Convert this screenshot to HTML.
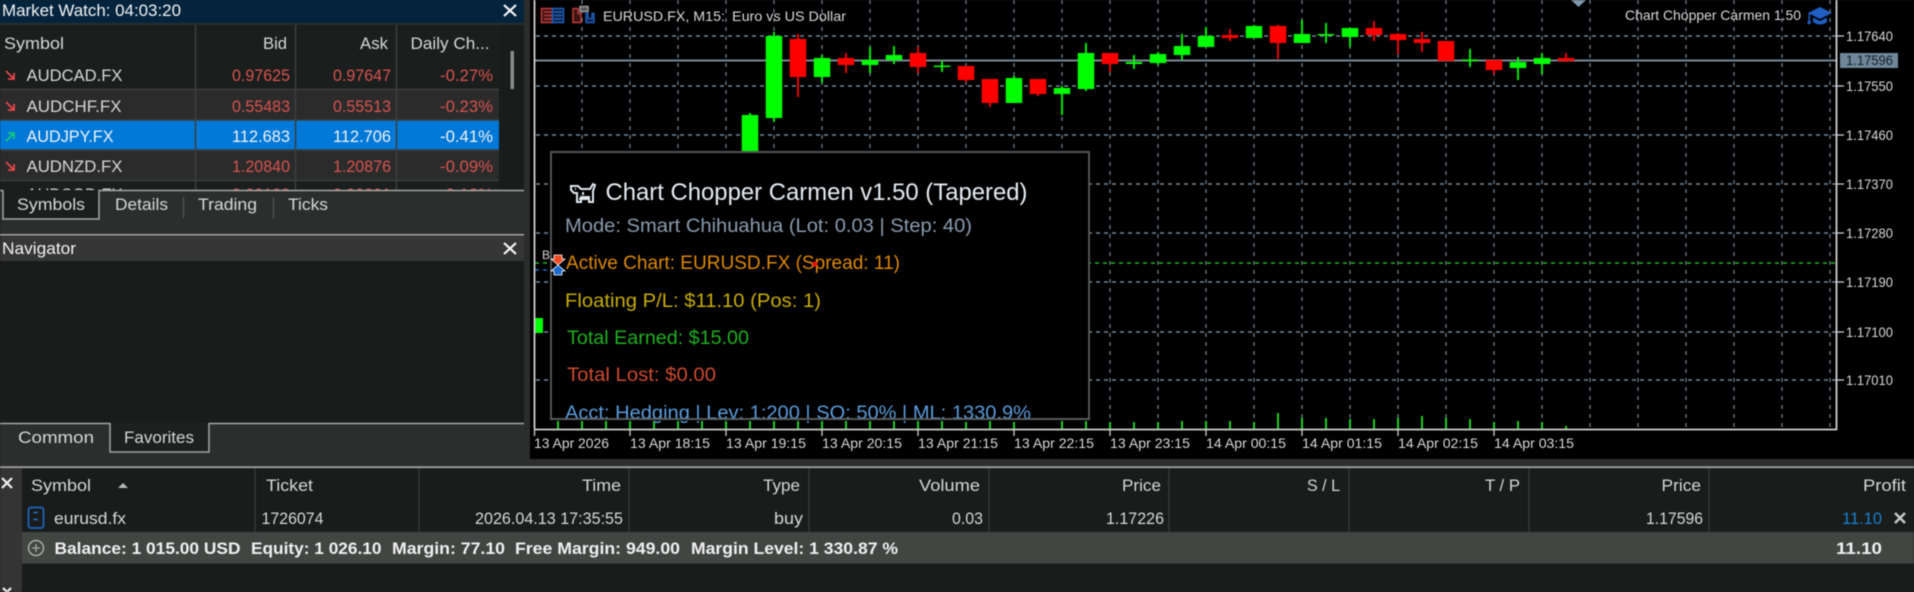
<!DOCTYPE html>
<html><head><meta charset="utf-8"><title>Market Watch</title>
<style>
html,body{margin:0;padding:0;background:#181c1a;width:1914px;height:592px;overflow:hidden}
svg{display:block;filter:blur(.45px)}
text{font-family:"Liberation Sans",sans-serif;font-size:17px;fill:#d6d8d6}
.r{fill:#d9534f}
.w{fill:#f2f4f4}
.c text,text.c{font-size:14px;fill:#d8d8d8}
.b{font-weight:bold;fill:#f0f0f0}
.p{font-size:19px}
</style></head><body>
<svg width="1914" height="592" viewBox="0 0 1914 592" xmlns="http://www.w3.org/2000/svg">
<rect width="1914" height="592" fill="#181c1a"/>

<!-- Market watch -->
<rect x="0" y="0" width="524" height="23" fill="#04243e"/>
<rect x="0" y="23" width="524" height="2" fill="#2a2d2b"/>
<text x="2" y="16" textLength="179" lengthAdjust="spacingAndGlyphs" class="w">Market Watch: 04:03:20</text>
<rect x="0" y="25" width="499" height="165" fill="#1a1e1c"/>
<rect x="499" y="25" width="25" height="165" fill="#181c1a"/>
<rect x="0" y="90" width="499" height="30" fill="#2b2b2b"/>
<rect x="0" y="120" width="499" height="30" fill="#0078d7"/>
<rect x="0" y="150" width="499" height="30" fill="#2b2b2b"/>
<path d="M0 89.500H499M0 120H499M0 150H499M0 180.500H499" stroke="#3c3e3d" stroke-width="1.500"/>
<path d="M195.500 25V190M295.500 25V190M396.500 25V190" stroke="#3c3e3d" stroke-width="1.500"/>
<rect x="510.500" y="51" width="3.500" height="38" fill="#8a8c8c"/>
<path d="M504 5l12 11M516 5l-12 11" stroke="#f4f4f4" stroke-width="2.200" fill="none"/>
<text x="4" y="49" textLength="60" lengthAdjust="spacingAndGlyphs">Symbol</text>
<text x="263" y="49" textLength="24" lengthAdjust="spacingAndGlyphs">Bid</text>
<text x="360" y="49" textLength="28" lengthAdjust="spacingAndGlyphs">Ask</text>
<text x="410.500" y="49" textLength="79" lengthAdjust="spacingAndGlyphs">Daily Ch...</text>
<g fill="none" stroke-width="1.800">
<path d="M6 71l8 8M14 73v6H8" stroke="#e8474a"/>
<path d="M6 102l8 8M14 104v6H8" stroke="#e8474a"/>
<path d="M6 141l8-8M8 133h6v6" stroke="#12c97a"/>
<path d="M6 162l8 8M14 164v6H8" stroke="#e8474a"/>
</g>
<text x="26.500" y="81" textLength="96" lengthAdjust="spacingAndGlyphs">AUDCAD.FX</text>
<text x="232" y="81" class="r" textLength="58" lengthAdjust="spacingAndGlyphs">0.97625</text><text x="333" y="81" class="r" textLength="58" lengthAdjust="spacingAndGlyphs">0.97647</text><text x="440" y="81" class="r" textLength="53" lengthAdjust="spacingAndGlyphs">-0.27%</text>
<text x="26.500" y="112" textLength="95" lengthAdjust="spacingAndGlyphs">AUDCHF.FX</text>
<text x="232" y="112" class="r" textLength="58" lengthAdjust="spacingAndGlyphs">0.55483</text><text x="333" y="112" class="r" textLength="58" lengthAdjust="spacingAndGlyphs">0.55513</text><text x="440" y="112" class="r" textLength="53" lengthAdjust="spacingAndGlyphs">-0.23%</text>
<text x="26.500" y="142" textLength="87" lengthAdjust="spacingAndGlyphs" class="w">AUDJPY.FX</text>
<text x="232" y="142" class="w" textLength="58" lengthAdjust="spacingAndGlyphs">112.683</text><text x="333" y="142" class="w" textLength="58" lengthAdjust="spacingAndGlyphs">112.706</text><text x="440" y="142" class="w" textLength="53" lengthAdjust="spacingAndGlyphs">-0.41%</text>
<text x="26.500" y="172" textLength="96" lengthAdjust="spacingAndGlyphs">AUDNZD.FX</text>
<text x="232" y="172" class="r" textLength="58" lengthAdjust="spacingAndGlyphs">1.20840</text><text x="333" y="172" class="r" textLength="58" lengthAdjust="spacingAndGlyphs">1.20876</text><text x="440" y="172" class="r" textLength="53" lengthAdjust="spacingAndGlyphs">-0.09%</text>
<text x="26.500" y="200" textLength="96" lengthAdjust="spacingAndGlyphs">AUDSGD.FX</text>
<text x="232" y="200" class="r" textLength="58" lengthAdjust="spacingAndGlyphs">0.90108</text><text x="333" y="200" class="r" textLength="58" lengthAdjust="spacingAndGlyphs">0.90091</text><text x="440" y="200" class="r" textLength="53" lengthAdjust="spacingAndGlyphs">-0.12%</text>

<!-- MW tabs -->
<rect x="0" y="190" width="524" height="44" fill="#2b2e2c"/>
<path d="M3 190V219H99V190Z" fill="#1a1e1c"/>
<path d="M0 190.500H3M3 190V219H99V190.500H524" fill="none" stroke="#a4a6a4" stroke-width="1.500"/>
<text x="17" y="210" textLength="68" lengthAdjust="spacingAndGlyphs">Symbols</text>
<text x="115" y="210" textLength="53" lengthAdjust="spacingAndGlyphs">Details</text>
<text x="198" y="210" textLength="59" lengthAdjust="spacingAndGlyphs">Trading</text>
<text x="288" y="210" textLength="40" lengthAdjust="spacingAndGlyphs">Ticks</text>
<path d="M183.500 197V218M273.500 197V218" stroke="#555856" stroke-width="1.200"/>

<!-- Navigator -->
<rect x="0" y="234" width="524" height="27" fill="#353635"/>
<rect x="0" y="234" width="524" height="1.500" fill="#a4a6a4"/>
<text x="2" y="254" textLength="74" lengthAdjust="spacingAndGlyphs" class="w">Navigator</text>
<path d="M504 243l12 11M516 243l-12 11" stroke="#f4f4f4" stroke-width="2.200" fill="none"/>
<rect x="0" y="423" width="524" height="44" fill="#2b2e2c"/>
<path d="M110 423H209V452H110Z" fill="#1c201e"/>
<path d="M0 423.500H110V452H209V423.500H524" fill="none" stroke="#a4a6a4" stroke-width="1.500"/>
<text x="18" y="443" textLength="76" lengthAdjust="spacingAndGlyphs">Common</text>
<text x="124" y="443" textLength="70" lengthAdjust="spacingAndGlyphs">Favorites</text>
<rect x="524" y="0" width="6" height="467" fill="#2a2d2b"/>
<rect x="524" y="459" width="1390" height="8" fill="#2b2e2c"/>

<!-- Chart -->
<rect x="530" y="0" width="1384" height="459" fill="#000"/>
<g stroke="#75889a" fill="none">
<path stroke-width="1.500" stroke-dasharray="4 4" d="M536 36H1836M536 86H1836M536 135H1836M536 184H1836M536 233H1836M536 282H1836M536 332H1836M536 380H1836"/>
<path stroke-width="1.200" stroke-dasharray="4 5" d="M582 0V429M630 0V429M678 0V429M726 0V429M774 0V429M822 0V429M870 0V429M918 0V429M966 0V429M1014 0V429M1062 0V429M1110 0V429M1158 0V429M1206 0V429M1254 0V429M1302 0V429M1350 0V429M1398 0V429M1446 0V429M1494 0V429M1542 0V429M1590 0V429M1638 0V429M1686 0V429M1734 0V429M1782 0V429M1830 0V429"/>
</g>
<rect x="535" y="59.500" width="1301" height="2" fill="#7a8894"/>
<path d="M535 263H1836" stroke="#1fb51f" stroke-width="1.500" stroke-dasharray="4 4"/>
<path d="M535 270H552" stroke="#1a66c8" stroke-width="1.500" stroke-dasharray="4 4"/>

<!-- candles: wicks -->
<g fill="none" stroke="#0f0" stroke-width="1.800">
<path d="M750 113V151M774 32V122M822 55V83M870 47V73M894 46V64M942 61V72M1014 76V103M1062 86V115M1086 43V91M1134 55V69M1158 52V65M1182 34V60M1206 27V47M1254 25V38M1302 20V43M1326 23V43M1350 28V47M1470 49V67M1518 57V80M1542 53V74"/>
</g>
<g fill="none" stroke="#f00" stroke-width="1.800">
<path d="M798 34V97M846 53V73M918 47V73M966 66V82M990 79V107M1038 79V96M1110 53V72M1230 29V41M1278 25V59M1374 21V41M1398 33V54M1422 32V52M1446 41V61M1494 60V74M1566 53V62"/>
</g>
<g fill="none" stroke="#0f0" stroke-width="16.500">
<path d="M750 115V151M774 36V118M822 58V77M870 60V65M894 55V60M942 65.500V67M1014 78V103M1062 88V94M1086 53V89M1134 62V64M1158 54V63M1182 46V55M1206 36V47M1254 26V38M1302 34V43M1326 34V35.500M1350 28V37M1470 59.500V61M1518 62V68M1542 58V64"/>
</g>
<g fill="none" stroke="#f00" stroke-width="16.500">
<path d="M798 39V77M846 58V65M918 53V67M966 66V80M990 79V103M1038 79V94M1110 53V64M1230 35V38M1278 26V43M1374 28V35M1398 34V40M1422 39V43M1446 41V61M1494 60V70M1566 58V61"/>
</g>
<rect x="535" y="318" width="8" height="15" fill="#0f0"/>

<!-- volumes -->
<g fill="none" stroke="#22cc22" stroke-width="2">
<path d="M558 421V429M582 421V429M606 421V429M630 421V429M654 421V429M678 421V429M702 421V429M726 421V429M750 421V429M774 421V429M798 421V429M822 421V429M846 421V429M870 421V429M894 421V429M918 421V429M942 421V429M966 422V429M990 421V429M1014 422V429M1062 420V429M1086 421V429M1110 422V429M1134 422V429M1158 422V429M1182 421V429M1206 421V429M1230 421V429M1254 422V429M1278 413V429M1302 418V429M1326 418V429M1350 419V429M1374 419V429M1398 418V429M1422 416V429M1446 418V429M1470 419V429M1494 422V429M1518 421V429M1542 422V429M1566 426V429"/>
</g>

<!-- axes -->
<path d="M534.500 0V429M534 429.500H1837M1836.500 0V430" fill="none" stroke="#cfcfcf" stroke-width="1.800"/>
<path d="M1837 36h7M1837 86h7M1837 135h7M1837 184h7M1837 233h7M1837 282h7M1837 332h7M1837 380h7" stroke="#cfcfcf" stroke-width="1.300"/>
<path d="M534.500 430v6M630 430v6M726 430v6M822 430v6M918 430v6M1014 430v6M1110 430v6M1206 430v6M1302 430v6M1398 430v6M1494 430v6" stroke="#cfcfcf" stroke-width="1.300"/>
<g class="c">
<text x="1846" y="41" textLength="47" lengthAdjust="spacingAndGlyphs">1.17640</text>
<text x="1846" y="91" textLength="47" lengthAdjust="spacingAndGlyphs">1.17550</text>
<text x="1846" y="140" textLength="47" lengthAdjust="spacingAndGlyphs">1.17460</text>
<text x="1846" y="189" textLength="47" lengthAdjust="spacingAndGlyphs">1.17370</text>
<text x="1846" y="238" textLength="47" lengthAdjust="spacingAndGlyphs">1.17280</text>
<text x="1846" y="287" textLength="47" lengthAdjust="spacingAndGlyphs">1.17190</text>
<text x="1846" y="337" textLength="47" lengthAdjust="spacingAndGlyphs">1.17100</text>
<text x="1846" y="385" textLength="47" lengthAdjust="spacingAndGlyphs">1.17010</text>
<text x="534" y="448" textLength="75" lengthAdjust="spacingAndGlyphs">13 Apr 2026</text>
<text x="630" y="448" textLength="80" lengthAdjust="spacingAndGlyphs">13 Apr 18:15</text>
<text x="726" y="448" textLength="80" lengthAdjust="spacingAndGlyphs">13 Apr 19:15</text>
<text x="822" y="448" textLength="80" lengthAdjust="spacingAndGlyphs">13 Apr 20:15</text>
<text x="918" y="448" textLength="80" lengthAdjust="spacingAndGlyphs">13 Apr 21:15</text>
<text x="1014" y="448" textLength="80" lengthAdjust="spacingAndGlyphs">13 Apr 22:15</text>
<text x="1110" y="448" textLength="80" lengthAdjust="spacingAndGlyphs">13 Apr 23:15</text>
<text x="1206" y="448" textLength="80" lengthAdjust="spacingAndGlyphs">14 Apr 00:15</text>
<text x="1302" y="448" textLength="80" lengthAdjust="spacingAndGlyphs">14 Apr 01:15</text>
<text x="1398" y="448" textLength="80" lengthAdjust="spacingAndGlyphs">14 Apr 02:15</text>
<text x="1494" y="448" textLength="80" lengthAdjust="spacingAndGlyphs">14 Apr 03:15</text>
<text x="603" y="21" textLength="122" lengthAdjust="spacingAndGlyphs">EURUSD.FX, M15:</text>
<text x="732" y="21" textLength="114" lengthAdjust="spacingAndGlyphs">Euro vs US Dollar</text>
<text x="1625" y="20" textLength="176" lengthAdjust="spacingAndGlyphs">Chart Chopper Carmen 1.50</text>
</g>
<rect x="1840" y="53" width="58" height="15" fill="#6f8799"/>
<text x="1846" y="65" class="c" style="fill:#14202a" textLength="47" lengthAdjust="spacingAndGlyphs">1.17596</text>
<path d="M1571 0H1586L1578.500 7Z" fill="#7f97aa"/>

<!-- chart header icons -->
<g fill="none" stroke-width="1.500">
<rect x="541.500" y="8.500" width="11" height="14" fill="#3a1414" stroke="#c23a3a"/>
<rect x="552.500" y="8.500" width="11" height="14" fill="#0e2240" stroke="#1e5fbe"/>
<path d="M544 12h8M544 15.500h8M544 19h8" stroke="#c23a3a"/>
<path d="M554 12h8M554 15.500h8M554 19h8" stroke="#1e5fbe"/>
<path d="M573 8.500h5v5h3v9h-8z" fill="#3a1414" stroke="#c23a3a"/>
<path d="M594 13.500v9h-8v-9h2v5h4v-5z" fill="#0e2240" stroke="#1e5fbe"/>
<rect x="580" y="6.500" width="8" height="5" fill="#555" stroke="#999"/>
</g>

<!-- hat -->
<g fill="#1f5fc4">
<path d="M1820 7L1832 13L1820 19L1808 13Z"/>
<path d="M1813 17.500L1820 21L1827 17.500V22Q1820 27 1813 22Z"/>
<path d="M1808.500 13H1810V21H1808.500Z"/>
<circle cx="1809.200" cy="22.500" r="1.700"/>
</g>

<!-- Info panel -->
<rect x="551" y="152" width="538" height="267" fill="#000" stroke="#5a5c5c" stroke-width="1.800"/>
<text x="605.500" y="200" style="font-size:24px;fill:#e4ecf2" textLength="422" lengthAdjust="spacingAndGlyphs">Chart Chopper Carmen v1.50 (Tapered)</text>
<path d="M571 186h7l3 3h9l3-5 2 1-2 6v11h-4v-5h-8v5h-4v-9h-3l-3-3zM575 189h1M583 192v3M579 199h9" fill="none" stroke="#dfe8ee" stroke-width="2"/>
<text x="565" y="232" class="p" style="fill:#8a9cae" textLength="407" lengthAdjust="spacingAndGlyphs">Mode: Smart Chihuahua (Lot: 0.03 | Step: 40)</text>
<text x="566" y="269" class="p" style="fill:#dd8800" textLength="334" lengthAdjust="spacingAndGlyphs">Active Chart: EURUSD.FX (Spread: 11)</text>
<text x="565" y="307" class="p" style="fill:#c8ac00" textLength="256" lengthAdjust="spacingAndGlyphs">Floating P/L: $11.10 (Pos: 1)</text>
<text x="567" y="344" class="p" style="fill:#1fb01f" textLength="182" lengthAdjust="spacingAndGlyphs">Total Earned: $15.00</text>
<text x="567" y="381" class="p" style="fill:#cf4b30" textLength="149" lengthAdjust="spacingAndGlyphs">Total Lost: $0.00</text>
<text x="565" y="419" class="p" style="fill:#5a9cdc" textLength="466" lengthAdjust="spacingAndGlyphs">Acct: Hedging | Lev: 1:200 | SO: 50% | ML: 1330.9%</text>
<rect x="550" y="418.200" width="540" height="2" fill="#5a5c5c"/>
<rect x="551" y="420" width="538" height="1" fill="#000"/>
<circle cx="815" cy="264" r="2.600" fill="#e81010"/>
<text x="542" y="259" class="c" style="font-size:12px">B</text>
<path d="M554 255h8v4h3l-7 6-7-6h3z" fill="#f04b20" stroke="#fff" stroke-width=".8"/>
<path d="M558 265l7 6h-3v4h-8v-4h-3z" fill="#1a6bd0" stroke="#fff" stroke-width=".8"/>

<!-- Terminal -->
<rect x="0" y="467" width="1914" height="125" fill="#181c1a"/>
<rect x="0" y="466.300" width="1914" height="1.800" fill="#a4a6a4"/>
<rect x="0" y="468" width="22" height="124" fill="#333433"/>
<path d="M2 478l10 10M12 478l-10 10M3 588l8 8M11 588l-8 8" stroke="#f0f0f0" stroke-width="2.200"/>
<rect x="22" y="532" width="1892" height="31" fill="#414642"/>
<path d="M22 532H1914M22 563.500H1914" stroke="#303331" stroke-width="1"/>
<path d="M255 468V532M419 468V532M629 468V532M809 468V532M989 468V532M1169 468V532M1349 468V532M1529 468V532M1709 468V532" stroke="#3a3d3b" stroke-width="1.300"/>
<text x="31" y="491" textLength="60" lengthAdjust="spacingAndGlyphs">Symbol</text>
<path d="M118 488l5-5 5 5z" fill="#b8b8b8"/>
<text x="266" y="491" textLength="47" lengthAdjust="spacingAndGlyphs">Ticket</text>
<text x="582" y="491" textLength="39" lengthAdjust="spacingAndGlyphs">Time</text>
<text x="763" y="491" textLength="37" lengthAdjust="spacingAndGlyphs">Type</text>
<text x="919" y="491" textLength="61" lengthAdjust="spacingAndGlyphs">Volume</text>
<text x="1122" y="491" textLength="39" lengthAdjust="spacingAndGlyphs">Price</text>
<text x="1307" y="491" textLength="33" lengthAdjust="spacingAndGlyphs">S / L</text>
<text x="1485" y="491" textLength="35" lengthAdjust="spacingAndGlyphs">T / P</text>
<text x="1661.500" y="491" textLength="39.500" lengthAdjust="spacingAndGlyphs">Price</text>
<text x="1863" y="491" textLength="43" lengthAdjust="spacingAndGlyphs">Profit</text>
<rect x="28.500" y="507.500" width="15" height="20.500" rx="2.500" fill="none" stroke="#1f66c4" stroke-width="1.700"/>
<path d="M33.500 512.500h4M33.500 519.500h4" stroke="#2c78d8" stroke-width="1.600"/>
<text x="54" y="524" textLength="72" lengthAdjust="spacingAndGlyphs">eurusd.fx</text>
<text x="261.500" y="524" textLength="62" lengthAdjust="spacingAndGlyphs">1726074</text>
<text x="475" y="524" textLength="148" lengthAdjust="spacingAndGlyphs">2026.04.13 17:35:55</text>
<text x="774" y="524" textLength="29" lengthAdjust="spacingAndGlyphs">buy</text>
<text x="952" y="524" textLength="31" lengthAdjust="spacingAndGlyphs">0.03</text>
<text x="1106" y="524" textLength="58" lengthAdjust="spacingAndGlyphs">1.17226</text>
<text x="1646" y="524" textLength="57" lengthAdjust="spacingAndGlyphs">1.17596</text>
<text x="1842" y="524" style="fill:#1a80d0" textLength="40" lengthAdjust="spacingAndGlyphs">11.10</text>
<path d="M1895 513l10 10M1905 513l-10 10" stroke="#c8c8c8" stroke-width="2.500"/>
<circle cx="36" cy="548" r="7.500" fill="none" stroke="#a8aaa8" stroke-width="1.500"/>
<path d="M32 548h8M36 544v8" stroke="#a8aaa8" stroke-width="1.300"/>
<text x="54.500" y="554" class="b" textLength="186" lengthAdjust="spacingAndGlyphs">Balance: 1 015.00 USD</text>
<text x="251" y="554" class="b" textLength="130.500" lengthAdjust="spacingAndGlyphs">Equity: 1 026.10</text>
<text x="392" y="554" class="b" textLength="113" lengthAdjust="spacingAndGlyphs">Margin: 77.10</text>
<text x="515" y="554" class="b" textLength="165" lengthAdjust="spacingAndGlyphs">Free Margin: 949.00</text>
<text x="691" y="554" class="b" textLength="207" lengthAdjust="spacingAndGlyphs">Margin Level: 1 330.87 %</text>
<text x="1836" y="554" class="b" textLength="46" lengthAdjust="spacingAndGlyphs">11.10</text>
</svg>
</body></html>
